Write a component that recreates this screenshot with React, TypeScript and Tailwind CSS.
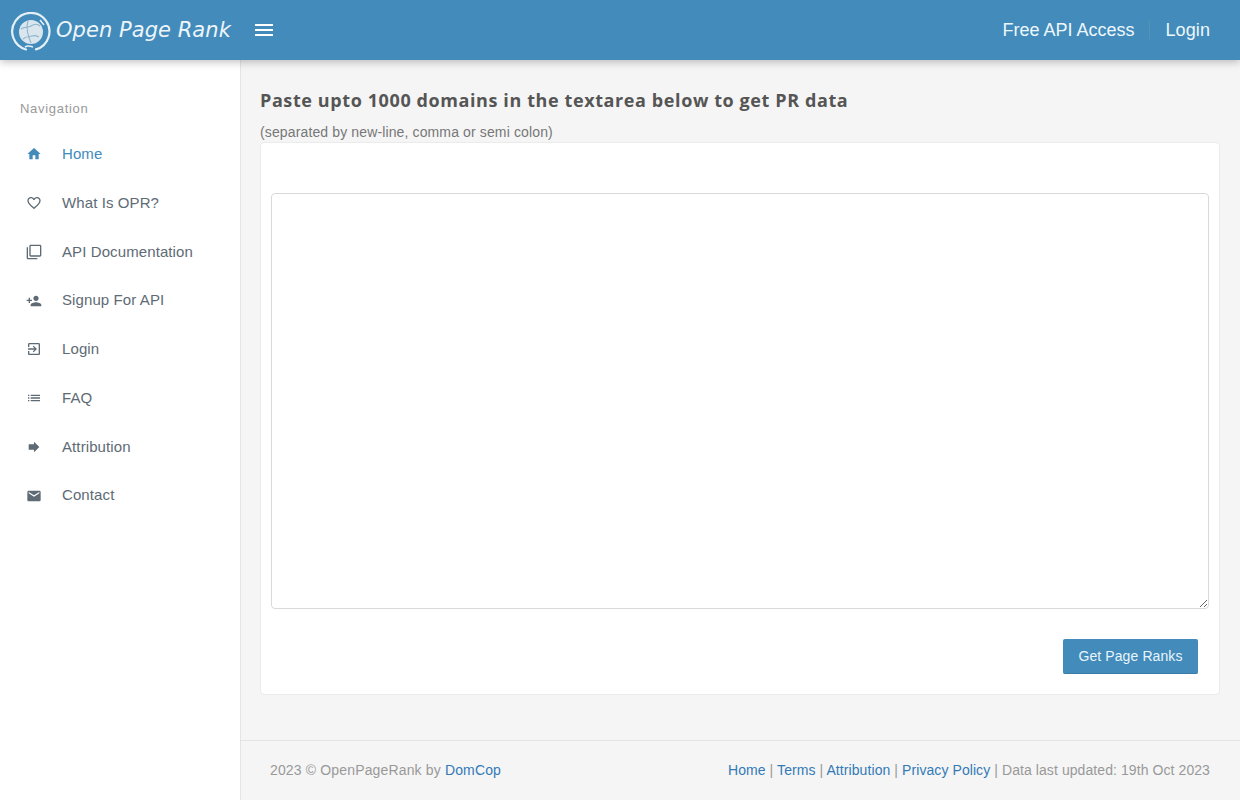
import React from "react";

const icons = {
  home: "M10 20v-6h4v6h5v-8h3L12 3 2 12h3v8z",
  heart:
    "M16.5 3c-1.74 0-3.41.81-4.5 2.09C10.91 3.81 9.24 3 7.5 3 4.42 3 2 5.42 2 8.5c0 3.78 3.4 6.86 8.55 11.54L12 21.35l1.45-1.32C18.6 15.36 22 12.28 22 8.5 22 5.42 19.58 3 16.5 3zm-4.4 15.55l-.1.1-.1-.1C7.14 14.24 4 11.39 4 8.5 4 6.5 5.5 5 7.5 5c1.54 0 3.04.99 3.57 2.36h1.87C13.46 5.99 14.96 5 16.5 5c2 0 3.5 1.5 3.5 3.5 0 2.89-3.14 5.74-7.9 10.05z",
  copy: "M3 5H1v16c0 1.1.9 2 2 2h14v-2H3V5zm18-4H7c-1.1 0-2 .9-2 2v14c0 1.1.9 2 2 2h14c1.1 0 2-.9 2-2V3c0-1.1-.9-2-2-2zm0 16H7V3h14v14z",
  personAdd:
    "M15 12c2.21 0 4-1.79 4-4s-1.79-4-4-4-4 1.79-4 4 1.79 4 4 4zm-9-2V7H4v3H1v2h3v3h2v-3h3v-2H6zm9 4c-2.67 0-8 1.34-8 4v2h16v-2c0-2.66-5.33-4-8-4z",
  exit: "M10.09 15.59L11.5 17l5-5-5-5-1.41 1.41L12.67 11H3v2h9.67l-2.58 2.59zM19 3H5c-1.11 0-2 .9-2 2v4h2V5h14v14H5v-4H3v4c0 1.1.89 2 2 2h14c1.1 0 2-.9 2-2V5c0-1.1-.9-2-2-2z",
  list: "M3 13h2v-2H3v2zm0 4h2v-2H3v2zm0-8h2V7H3v2zm4 4h14v-2H7v2zm0 4h14v-2H7v2zM7 7v2h14V7H7z",
  forward: "M12 8V4l8 8-8 8v-4H4V8z",
  mail: "M20 4H4c-1.1 0-1.99.9-1.99 2L2 18c0 1.1.9 2 2 2h16c1.1 0 2-.9 2-2V6c0-1.1-.9-2-2-2zm0 4l-8 5-8-5V6l8 5 8-5v2z",
  menu: "M3 18h18v-2H3v2zm0-5h18v-2H3v2zm0-7v2h18V6H3z",
};

const nav = [
  { label: "Home", icon: icons.home, active: true },
  { label: "What Is OPR?", icon: icons.heart },
  { label: "API Documentation", icon: icons.copy },
  { label: "Signup For API", icon: icons.personAdd },
  { label: "Login", icon: icons.exit },
  { label: "FAQ", icon: icons.list },
  { label: "Attribution", icon: icons.forward },
  { label: "Contact", icon: icons.mail },
];

function Icon({ d, className }: { d: string; className?: string }) {
  return (
    <svg viewBox="0 0 24 24" fill="currentColor" className={className}>
      <path d={d} />
    </svg>
  );
}

function Logo() {
  return (
    <svg viewBox="0 0 40 40" className="h-10 w-10 shrink-0" fill="none">
      <path
        d="M15 37.5A18.6 18.6 0 1 1 25 37.4"
        stroke="#e4eff6"
        strokeWidth="2.2"
        strokeLinecap="round"
      />
      <circle cx="20" cy="20" r="12" fill="#d9e6ee" />
      <path
        d="M10 17c4-3 7-1 10-3s6-3 9 0M12 27c3-3 6-2 9-3s5 0 7 1M17 9c-2 6 0 15 3 22"
        stroke="#8fb4cc"
        strokeWidth="1.1"
      />
      <path d="M29 8l4 5M14 35c3-2 5-1 8 0" stroke="#e4eff6" strokeWidth="1.6" />
    </svg>
  );
}

export default function App() {
  return (
    <div className="flex h-screen flex-col overflow-hidden bg-[#f5f5f5] font-['Liberation_Sans',Arial,sans-serif]">
      <header className="relative z-10 flex h-[60px] shrink-0 items-center bg-[#428bba] pr-[30px] pl-[11px] shadow-[0_2px_8px_rgba(0,0,0,0.25)]">
        <div className="mt-[4px] flex items-center gap-[5px]">
          <Logo />
          <span className="mt-[-2px] font-['DejaVu_Sans',sans-serif] text-[21px] tracking-[0.05px] text-[#eef5fa] italic">
            Open Page Rank
          </span>
        </div>
        <button className="mb-[1px] ml-[21px] text-white">
          <Icon d={icons.menu} className="h-[24px] w-[24px]" />
        </button>
        <nav className="ml-auto flex items-center text-lg text-[#eef7fc]">
          <a>Free API Access</a>
          <span className="mx-[15px] h-[18px] w-px bg-[#5a90b0]" />
          <a className="tracking-[0.1px]">Login</a>
        </nav>
      </header>

      <div className="flex min-h-0 flex-1">
        <aside className="w-[241px] shrink-0 border-r border-[#e4e4e4] bg-white pt-[40px]">
          <p className="pl-[20px] text-[13px] leading-[18px] tracking-[0.7px] text-[#999]">Navigation</p>
          <ul className="mt-[12px]">
            {nav.map((item) => (
              <li
                key={item.label}
                className={`flex h-[48.75px] items-center pl-[26px] text-[15px] tracking-[0.1px] ${
                  item.active ? "text-[#428bba]" : "text-[#5e6b75]"
                }`}
              >
                <Icon d={item.icon} className="h-[16px] w-[16px] shrink-0" />
                <span className="ml-[20px]">{item.label}</span>
              </li>
            ))}
          </ul>
        </aside>

        <main className="flex min-w-0 flex-1 flex-col">
          <div className="flex-1 pt-[29px] pr-[20px] pl-[19px]">
            <h1 className="font-['Open_Sans',sans-serif] text-lg leading-[22px] font-bold tracking-[0.6px] text-[#555]">
              Paste upto 1000 domains in the textarea below to get PR data
            </h1>
            <p className="mt-[11px] text-sm leading-[20px] tracking-[0.13px] text-[#777]">
              (separated by new-line, comma or semi colon)
            </p>
            <div className="flex h-[553px] flex-col rounded border border-[#ebebeb] bg-white px-[10px] pt-[50px]">
              <textarea className="h-[416px] w-full rounded border border-[#d9d9d9] bg-white" />
              <div className="mt-[30px] flex justify-end pr-[11px]">
                <button className="h-[35px] w-[135px] rounded-[2px] border-b border-[#3a7ca6] bg-[#428bba] text-sm tracking-[0.1px] text-[#e8f5fc]">
                  Get Page Ranks
                </button>
              </div>
            </div>
          </div>

          <footer className="flex h-[60px] shrink-0 items-center justify-between border-t border-[#e4e4e4] pr-[30px] pb-[2px] pl-[29px] text-sm text-[#999]">
            <p className="tracking-[0.15px]">
              2023 © OpenPageRank by <a className="text-[#337ab7]">DomCop</a>
            </p>
            <p className="tracking-[0.08px]">
              <a className="text-[#337ab7]">Home</a> | <a className="text-[#337ab7]">Terms</a> |{" "}
              <a className="text-[#337ab7]">Attribution</a> | <a className="text-[#337ab7]">Privacy Policy</a> | Data
              last updated: 19th Oct 2023
            </p>
          </footer>
        </main>
      </div>
    </div>
  );
}
